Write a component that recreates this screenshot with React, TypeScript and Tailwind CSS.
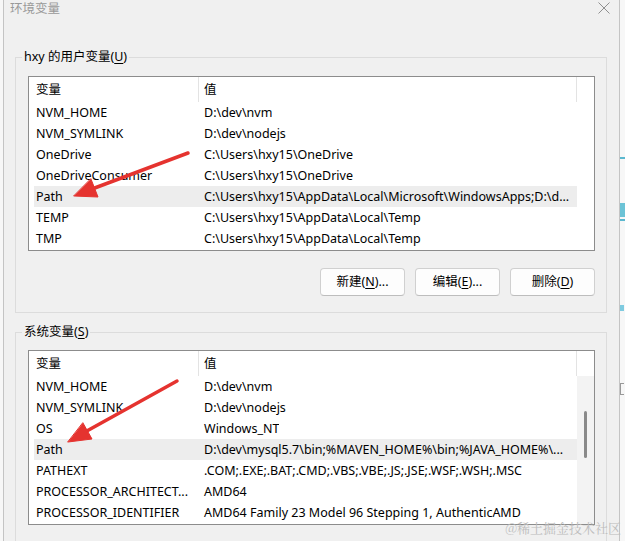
import React from "react";

type Row = [string, string];

const userVars: Row[] = [
  ["NVM_HOME", "D:\\dev\\nvm"],
  ["NVM_SYMLINK", "D:\\dev\\nodejs"],
  ["OneDrive", "C:\\Users\\hxy15\\OneDrive"],
  ["OneDriveConsumer", "C:\\Users\\hxy15\\OneDrive"],
  ["Path", "C:\\Users\\hxy15\\AppData\\Local\\Microsoft\\WindowsApps;D:\\d..."],
  ["TEMP", "C:\\Users\\hxy15\\AppData\\Local\\Temp"],
  ["TMP", "C:\\Users\\hxy15\\AppData\\Local\\Temp"],
];

const sysVars: Row[] = [
  ["NVM_HOME", "D:\\dev\\nvm"],
  ["NVM_SYMLINK", "D:\\dev\\nodejs"],
  ["OS", "Windows_NT"],
  ["Path", "D:\\dev\\mysql5.7\\bin;%MAVEN_HOME%\\bin;%JAVA_HOME%\\..."],
  ["PATHEXT", ".COM;.EXE;.BAT;.CMD;.VBS;.VBE;.JS;.JSE;.WSF;.WSH;.MSC"],
  ["PROCESSOR_ARCHITECT...", "AMD64"],
  ["PROCESSOR_IDENTIFIER", "AMD64 Family 23 Model 96 Stepping 1, AuthenticAMD"],
];

function ListView({ rows, selected, scroll }: { rows: Row[]; selected: number; scroll: boolean }) {
  return (
    <div className="w-[567px] h-[175px] border border-[#8c8c8c] bg-white flex flex-col text-black">
      <div className="flex h-[25px] shrink-0">
        <div className="w-[170px] h-full pl-[7px] flex items-center border-r border-[#e3e3e3]">变量</div>
        <div className="w-[378px] h-full pl-[5px] flex items-center border-r border-[#e3e3e3]">值</div>
        <div className="flex-1" />
      </div>
      <div className="flex flex-1 min-h-0">
        <div className="flex-1 pl-[5px]">
          {rows.map(([k, v], i) => (
            <div
              key={k}
              className={
                i === selected
                  ? "flex h-[21px] items-center bg-[#ededed]"
                  : "flex h-[21px] items-center"
              }
            >
              <div className="w-[164px] shrink-0 pl-[2px] whitespace-nowrap overflow-hidden">{k}</div>
              <div className="pl-[6px] whitespace-nowrap overflow-hidden">{v}</div>
            </div>
          ))}
        </div>
        {scroll ? (
          <div className="w-[17px] bg-[#f3f3f3] flex flex-col items-center">
            <div className="mt-[35px] w-[3px] h-[47px] rounded-full bg-[#8a8a8a]" />
          </div>
        ) : (
          <div className="w-[17px]" />
        )}
      </div>
    </div>
  );
}

function Btn({ label, hot, tail }: { label: string; hot: string; tail: string }) {
  return (
    <div className="w-[85px] h-[28px] rounded-[4px] border border-[#d0d0d0] border-b-[#bdbdbd] bg-[#fdfdfd] flex items-center justify-center text-black">
      {label}(<span className="underline underline-offset-2">{hot}</span>){tail}
    </div>
  );
}

export default function App() {
  return (
    <div className="relative w-[625px] h-[541px] overflow-hidden flex bg-[#f7f7f7] font-['Noto_Sans','Noto_Sans_CJK_SC',sans-serif] text-[12.5px] leading-[16px]">
      <div className="w-[3px] shrink-0" />
      <div className="w-[617px] shrink-0 h-full bg-[#f0f0f0] border-l border-r border-[#c4c4c4] flex flex-col">
        <div className="h-[20px] shrink-0 flex items-start justify-between pl-[6px] pr-[9px] pt-[1px]">
          <span className="text-[#999999] leading-[15px] text-[12.5px]">环境变量</span>
          <svg width="12" height="12" viewBox="0 0 12 12" className="mt-[1px]">
            <path d="M0.5 0.5 L11.5 11.5 M11.5 0.5 L0.5 11.5" stroke="#8f8f8f" strokeWidth="1" fill="none" />
          </svg>
        </div>
        <div className="pl-[11px] pr-[12px] pt-[29px] flex flex-col">
          <fieldset className="border border-[#dcdcdc] pl-[12px] pr-[11px] pt-[11px] pb-[16px] m-0">
            <legend className="ml-[-6px] px-[2px] leading-[16px] text-black">
              hxy 的用户变量(<span className="underline underline-offset-2">U</span>)
            </legend>
            <ListView rows={userVars} selected={4} scroll={false} />
            <div className="flex justify-end gap-[10px] mt-[17px]">
              <Btn label="新建" hot="N" tail="..." />
              <Btn label="编辑" hot="E" tail="..." />
              <Btn label="删除" hot="D" tail="" />
            </div>
          </fieldset>
          <fieldset className="mt-[11px] border border-[#dcdcdc] pl-[12px] pr-[11px] pt-[10px] pb-[40px] m-0">
            <legend className="ml-[-6px] px-[2px] leading-[16px] text-black">
              系统变量(<span className="underline underline-offset-2">S</span>)
            </legend>
            <ListView rows={sysVars} selected={3} scroll={true} />
          </fieldset>
        </div>
      </div>
      <div className="flex-1 flex flex-col overflow-hidden">
        <div className="mt-[157px] h-[2px] bg-[#5bb8cf]" />
        <div className="mt-[44px] h-[14px] bg-[#6cc3d6]" />
        <div className="mt-[2px] h-[2px] bg-[#5bb8cf]" />
        <div className="mt-[84px] h-[6px] w-[4px] bg-[#7fcbe0]" />
        <div className="mt-[72px] h-[12px] w-[4px] border-t border-l border-b border-[#999]" />
      </div>

      <svg className="absolute left-0 top-0 pointer-events-none" width="625" height="541" viewBox="0 0 625 541">
        <g fill="#e5332f" stroke="#e5332f" strokeLinecap="round" strokeLinejoin="round">
          <line x1="188" y1="153" x2="92" y2="189" strokeWidth="3.5" />
          <polygon points="74,196 98,197 91,179" strokeWidth="1" />
          <line x1="177" y1="381" x2="85" y2="432" strokeWidth="3.5" />
          <polygon points="68,442 92,439 83,423" strokeWidth="1" />
        </g>
      </svg>

      <div className="absolute right-[4px] bottom-[5px] text-[13px] leading-[16px] text-[#bdbdbd] font-['Noto_Serif_CJK_SC','Noto_Sans_CJK_SC',serif] whitespace-nowrap">
        @稀土掘金技术社区
      </div>
    </div>
  );
}
